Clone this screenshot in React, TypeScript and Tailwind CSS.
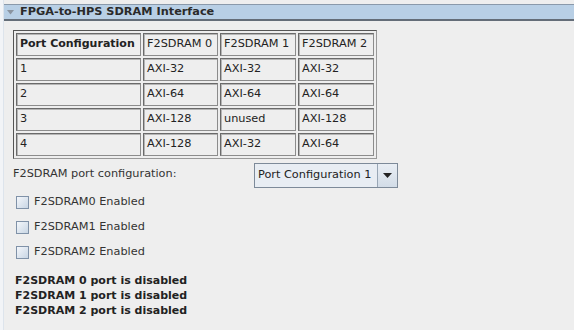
import { useState } from 'react';

const rows = [
    ['1', 'AXI-32', 'AXI-32', 'AXI-32'],
    ['2', 'AXI-64', 'AXI-64', 'AXI-64'],
    ['3', 'AXI-128', 'unused', 'AXI-128'],
    ['4', 'AXI-128', 'AXI-32', 'AXI-64'],
];

const cell = "h-[23px] px-[3px] py-0 text-left font-normal whitespace-nowrap overflow-hidden border border-t-[#6a6a6a] border-l-[#6a6a6a] border-r-[#8c8c8c] border-b-[#8c8c8c] shadow-[inset_1px_1px_0_#b5b5b5]";

function App() {
    const [enabled, setEnabled] = useState([false, false, false]);

    return (
        <div className="w-[574px] h-[330px] bg-[#eeeeee] flex text-[11.3px] text-[#333] font-['DejaVu_Sans',sans-serif] overflow-hidden">
            <div className="w-[4px] bg-[#f2f4f7] border-r border-[#dde4ec]"></div>
            <div className="flex-1 flex flex-col pt-[4px]">
                <div className="h-[17px] flex items-center gap-[6px] pl-[3px] bg-[#b8cfe5] border-t border-t-[#8a99aa] border-b-2 border-b-[#646d78]">
                    <svg width="7" height="5" viewBox="0 0 7 5"><path d="M0 0h7L3.5 4.5z" fill="#8a94a0" /></svg>
                    <span className="font-bold text-[11.3px] text-[#2a2a2a]">FPGA-to-HPS SDRAM Interface</span>
                </div>

                <div className="pl-[9px] pt-[9px]">
                    <table className="table-fixed border-separate border-spacing-[2px] border border-t-[#555] border-l-[#555] border-r-[#999] border-b-[#999] text-[#222]">
                        <thead>
                            <tr>
                                <th className={cell + " w-[125px] !font-bold text-[11px]"}>Port Configuration</th>
                                <th className={cell + " w-[75px]"}>F2SDRAM 0</th>
                                <th className={cell + " w-[76px]"}>F2SDRAM 1</th>
                                <th className={cell + " w-[76px]"}>F2SDRAM 2</th>
                            </tr>
                        </thead>
                        <tbody>
                            {rows.map(r => (
                                <tr key={r[0]}>
                                    {r.map((v, i) => <td key={i} className={cell}>{v}</td>)}
                                </tr>
                            ))}
                        </tbody>
                    </table>
                </div>

                <div className="flex items-start pl-[9px] pt-[4px]">
                    <span className="w-[241px] pt-[3px]">F2SDRAM port configuration:</span>
                    <div className="h-[25px] flex border border-[#7d8a99] bg-[#eaeef3]">
                        <div className="w-[122px] pl-[3px] flex items-center whitespace-nowrap bg-[#e8edf3] text-[#222]">Port Configuration 1</div>
                        <div className="w-[20px] flex items-center justify-center border-l border-[#98a6b5] bg-[linear-gradient(#e9eef4,#d2dce7)]">
                            <svg width="9" height="5" viewBox="0 0 9 5"><path d="M0 0h9L4.5 5z" fill="#222" /></svg>
                        </div>
                    </div>
                </div>

                <div className="flex flex-col gap-[12px] pl-[12px] pt-[8px]">
                    {enabled.map((on, i) => (
                        <label key={i} className="flex items-center gap-[5px] h-[13px]">
                            <span
                                onClick={() => setEnabled(enabled.map((e, j) => (j === i ? !e : e)))}
                                className="w-[13px] h-[13px] border border-[#8092a8] bg-[linear-gradient(135deg,#f4f7fb,#c9d6e4)] text-[10px] leading-[11px] text-center"
                            >{on ? '✓' : ''}</span>
                            <span>F2SDRAM{i} Enabled</span>
                        </label>
                    ))}
                </div>

                <div className="flex flex-col pl-[11px] pt-[14px] font-bold text-[11px] text-[#222] leading-[15px]">
                    <span>F2SDRAM 0 port is disabled</span>
                    <span>F2SDRAM 1 port is disabled</span>
                    <span>F2SDRAM 2 port is disabled</span>
                </div>
            </div>
        </div>
    );
}

export default App;
